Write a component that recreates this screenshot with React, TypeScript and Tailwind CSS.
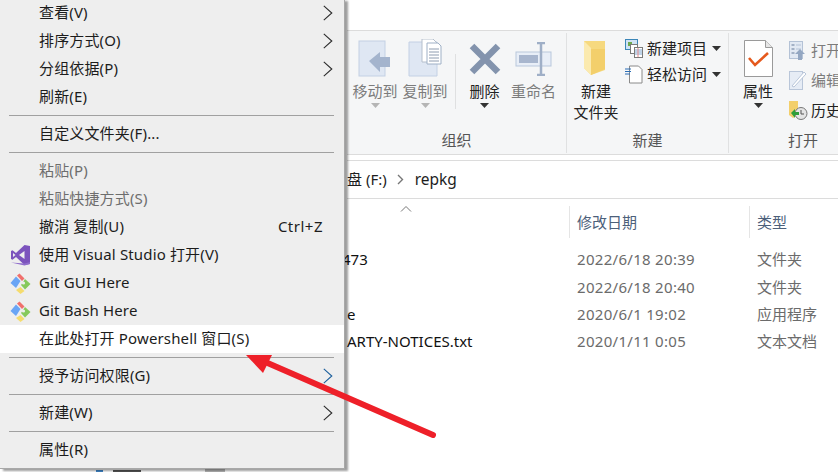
import React from 'react';

const Caret = ({ color = '#333' }: { color?: string }) => (
  <svg width="9" height="5" viewBox="0 0 9 5" className="block"><path d="M0 0h9L4.5 5z" fill={color} /></svg>
);

const Chevron = ({ color = '#2b2b2b' }: { color?: string }) => (
  <svg width="10" height="16" viewBox="0 0 10 16" className="block">
    <path d="M0.8 0.8 L8.8 8 L0.8 15.2" fill="none" stroke={color} strokeWidth="1.1" />
  </svg>
);

const VsIcon = () => (
  <svg width="21" height="21" viewBox="0 0 21 21">
    <path d="M20 1 14.5 0 6 8 2.5 5.2 1 6v8l1.5.8L6 12l8.5 8 5.5-1z" fill="#7c53bd" />
    <path d="M14.5 6v8L9 10zM3 8l2.5 2L3 12z" fill="#eeeeee" />
    <path d="M1 17.5 14.5 20.5 20 19v-2l-5.5 1.5z" fill="#8f6ccb" />
  </svg>
);

const GitIcon = () => (
  <svg width="21" height="21" viewBox="0 0 21 21">
    <path d="M6 3.5 10.5 8 6 15 0.5 10z" fill="#6aa5f5" />
    <path d="M10.5 14 14.5 18 10.5 21 6 17z" fill="#f5dc6e" />
    <path d="M15 6 20.5 11 15 16.5 11 12z" fill="#86c95c" />
    <path d="M7 2.5 9.5 0.5 14.5 5.5 12 8z" fill="#f0706c" />
    <circle cx="13.5" cy="10" r="1.6" fill="#eeeeee" />
  </svg>
);

type MenuItem = {
  label?: string;
  sep?: boolean;
  sub?: boolean;
  dim?: boolean;
  hot?: boolean;
  icon?: React.ReactNode;
  shortcut?: string;
  chevronColor?: string;
};

const menu: MenuItem[] = [
  { label: '查看(V)', sub: true },
  { label: '排序方式(O)', sub: true },
  { label: '分组依据(P)', sub: true },
  { label: '刷新(E)' },
  { sep: true },
  { label: '自定义文件夹(F)...' },
  { sep: true },
  { label: '粘贴(P)', dim: true },
  { label: '粘贴快捷方式(S)', dim: true },
  { label: '撤消 复制(U)', shortcut: 'Ctrl+Z' },
  { label: '使用 Visual Studio 打开(V)', icon: <VsIcon /> },
  { label: 'Git GUI Here', icon: <GitIcon /> },
  { label: 'Git Bash Here', icon: <GitIcon /> },
  { label: '在此处打开 Powershell 窗口(S)', hot: true },
  { sep: true },
  { label: '授予访问权限(G)', sub: true, chevronColor: '#1c5f9c' },
  { sep: true },
  { label: '新建(W)', sub: true },
  { sep: true },
  { label: '属性(R)' },
];

const ContextMenu = () => (
  <div className="absolute left-0 top-[-1px] w-[345px] h-[470px] bg-[#eeeeee] border-r border-b border-[#a8a8a8] shadow-[3px_2px_2px_rgba(0,0,0,0.38)] text-[15px] tracking-[0.15px] text-[#1c1c1c]">
    {menu.map((m, i) =>
      m.sep ? (
        <div key={i} className="h-[9px] flex items-center pl-[9px] pr-[10px]">
          <div className="h-px w-full bg-[#a0a0a0]" />
        </div>
      ) : (
        <div key={i} className={`h-[28px] flex items-center relative ${m.hot ? 'bg-white' : ''}`}>
          <div className="w-[39px] shrink-0 flex justify-center pl-[1px]">{m.icon}</div>
          <span className={`flex-1 -mt-[2px] whitespace-nowrap ${m.dim ? 'text-[#6d6d6d]' : ''}`}>{m.label}</span>
          {m.shortcut && <span className="mr-[21px] -mt-[2px] tracking-[0.5px]">{m.shortcut}</span>}
          {m.sub && <div className="mr-[11px]"><Chevron color={m.chevronColor} /></div>}
        </div>
      )
    )}
  </div>
);

const Arrow = () => (
  <svg width="200" height="95" viewBox="0 0 200 95" className="absolute left-[243px] top-[353px]">
    <path d="M20 8 190 82" stroke="#ee2029" strokeWidth="6" strokeLinecap="round" fill="none" />
    <path d="M3 2H29L20 20z" fill="#ee2029" />
  </svg>
);

const MoveIcon = () => (
  <svg width="34" height="38" viewBox="0 0 34 38">
    <rect x="1" y="1" width="26" height="35" fill="#dfe7f3" stroke="#c3d0e4" />
    <path d="M12 27 23 18v5h10v10H23v5z" transform="translate(-1 -6)" fill="#a4b4cd" />
  </svg>
);

const CopyIcon = () => (
  <svg width="34" height="40" viewBox="0 0 34 40">
    <path d="M1 3h28v34H1z" fill="#dfe7f3" stroke="#c3d0e4" />
    <path d="M14 0h11l5 5v18H14z" fill="#fff" stroke="#b5bfcc" />
    <path d="M19 4h11l3 3v18H19z" fill="#fff" stroke="#9fb0c6" />
    <path d="M21 10h10M21 13h10M21 16h10M21 19h10M21 22h10" stroke="#8e9cb0" />
  </svg>
);

const DeleteIcon = () => (
  <svg width="32" height="32" viewBox="0 0 32 32">
    <path d="M3 3 29 29M29 3 3 29" stroke="#8393ad" strokeWidth="6.5" />
  </svg>
);

const RenameIcon = () => (
  <svg width="38" height="34" viewBox="0 0 38 34">
    <rect x="1" y="10" width="35" height="14" fill="#e8eef7" stroke="#b9c7dc" />
    <rect x="4" y="13" width="19" height="8" fill="#a8b6ce" />
    <path d="M22 1h8M22 33h8M26 1v32" stroke="#9fafc7" strokeWidth="2.5" fill="none" />
  </svg>
);

const FolderIcon = () => (
  <svg width="26" height="36" viewBox="0 0 26 36">
    <path d="M1 0h21v29L8 34 1 27z" fill="#f6d97f" />
    <path d="M1 0 8 7v27L1 27z" fill="#fbeaaf" />
    <path d="M8 8h14v20L8 34z" fill="#f3cf6b" />
  </svg>
);

const NewItemIcon = () => (
  <svg width="18" height="19" viewBox="0 0 18 19">
    <rect x="0.5" y="0.5" width="12" height="10" fill="#cfe3f5" stroke="#3b86b8" />
    <rect x="3" y="3" width="4" height="4" fill="#6ea94e" />
    <rect x="5.5" y="5.5" width="7" height="9" fill="#fff" stroke="#7a7a7a" />
    <rect x="9.5" y="8.5" width="8" height="10" fill="#fff" stroke="#7a7a7a" />
    <path d="M10 11h7M10 13h7M10 15h7" stroke="#7fa6cf" />
    <path d="M13 9v9" stroke="#e58a8a" />
  </svg>
);

const EasyAccessIcon = () => (
  <svg width="18" height="19" viewBox="0 0 18 19">
    <path d="M4.5 1v17h12.5V4.5L13.5 1z" fill="#fff" stroke="#8a8a8a" />
    <path d="M0 4h6M0 6.5h6M0 9h5" stroke="#2a6db5" />
  </svg>
);

const PropertiesIcon = () => (
  <svg width="29" height="37" viewBox="0 0 29 37">
    <path d="M.5.5h21l7 7v29H.5z" fill="#fff" stroke="#9a9a9a" />
    <path d="M21.5.5v7h7" fill="#e6e6e6" stroke="#9a9a9a" />
    <path d="M5 18l6 7L24 13" stroke="#e5591d" strokeWidth="2.6" fill="none" />
  </svg>
);

const OpenIcon = () => (
  <svg width="17" height="19" viewBox="0 0 17 19">
    <rect x="0.5" y="0.5" width="13" height="17" fill="#e2e9f3" stroke="#b4c2d6" />
    <path d="M2.5 3h3v2h-3zM2.5 7h3v2h-3zM2.5 11h3v2h-3z" fill="#a3b1c6" />
    <path d="M7 4h5M7 8h5" stroke="#b4c2d6" />
    <path d="M11 8l5 5h-3v6H9v-6H6z" fill="#94a7c2" />
  </svg>
);

const EditIcon = () => (
  <svg width="18" height="20" viewBox="0 0 18 20">
    <rect x="0.5" y="1.5" width="13" height="18" fill="#e6ecf5" stroke="#b9c6d9" />
    <path d="M3 16 15 2l2 2L5 17z" fill="#fff" stroke="#b9c6d9" />
  </svg>
);

const HistoryIcon = () => (
  <svg width="19" height="19" viewBox="0 0 19 19">
    <path d="M0 0h9v14L4 17l-4-3z" fill="#f3cf6b" />
    <circle cx="12" cy="12.5" r="6" fill="#e4e4e4" stroke="#777" />
    <path d="M12 9v4h3" stroke="#555" fill="none" />
    <path d="M2 12l4-4v3h4v3H6v3z" fill="#2f9e3a" />
  </svg>
);

const BigButton = ({ icon, label, dim, caret, w }: { icon: React.ReactNode; label: string; dim?: boolean; caret?: boolean; w: string }) => (
  <div className={`${w} flex flex-col items-center shrink-0`}>
    <div className="h-[41px] flex items-center justify-center">{icon}</div>
    <span className={`mt-[2px] h-[20px] leading-[20px] whitespace-nowrap ${dim ? 'text-[#7c7c7c]' : ''}`}>{label}</span>
    {caret && <div className="mt-[2px]"><Caret color={dim ? '#b5b5b5' : '#333'} /></div>}
  </div>
);

const SmallRow = ({ icon, label, caret, dim, h }: { icon: React.ReactNode; label: string; caret?: boolean; dim?: boolean; h: string }) => (
  <div className={`flex items-center ${h}`}>
    <div className="w-[22px] shrink-0 flex">{icon}</div>
    <span className={`whitespace-nowrap ${dim ? 'text-[#7c7c7c]' : ''}`}>{label}</span>
    {caret && <div className="ml-[5px]"><Caret /></div>}
  </div>
);

const GroupLabel = ({ text }: { text: string }) => (
  <div className="absolute left-0 right-0 bottom-[2px] text-center text-[#555]">{text}</div>
);

const Ribbon = () => (
  <div className="h-[125px] bg-[#f5f6f7] border-y border-[#dcdcdc] flex text-[15px] text-[#222] overflow-hidden">
    {/* 组织 */}
    <div className="relative w-[220px] shrink-0 h-[120px] mt-[2px] border-r border-[#e0e1e2] pt-[5px] flex pl-[3px]">
      <BigButton w="w-[50px]" icon={<MoveIcon />} label="移动到" dim caret />
      <BigButton w="w-[50px]" icon={<CopyIcon />} label="复制到" dim caret />
      <div className="w-px h-[55px] bg-[#dfe0e1] mt-[16px] ml-[5px]" />
      <BigButton w="w-[57px]" icon={<DeleteIcon />} label="删除" caret />
      <BigButton w="w-[41px]" icon={<RenameIcon />} label="重命名" dim />
      <GroupLabel text="组织" />
    </div>
    {/* 新建 */}
    <div className="relative w-[162px] shrink-0 h-[120px] mt-[2px] border-r border-[#e0e1e2] pt-[5px] flex pl-[4px]">
      <div className="w-[50px] flex flex-col items-center shrink-0">
        <div className="h-[41px] flex items-center justify-center"><FolderIcon /></div>
        <span className="mt-[2px] leading-[21px]">新建</span>
        <span className="leading-[21px] whitespace-nowrap">文件夹</span>
      </div>
      <div className="ml-[4px] -mt-[3px]">
        <SmallRow h="h-[26px]" icon={<NewItemIcon />} label="新建项目" caret />
        <SmallRow h="h-[26px]" icon={<EasyAccessIcon />} label="轻松访问" caret />
      </div>
      <GroupLabel text="新建" />
    </div>
    {/* 打开 */}
    <div className="relative w-[109px] shrink-0 h-[120px] mt-[2px] pt-[5px] flex pl-[5px]">
      <div className="w-[48px] shrink-0">
        <BigButton w="w-[48px]" icon={<PropertiesIcon />} label="属性" caret />
      </div>
      <div className="ml-[7px] -mt-[2px]">
        <SmallRow h="h-[29px]" icon={<OpenIcon />} label="打开" dim />
        <SmallRow h="h-[30px]" icon={<EditIcon />} label="编辑" dim />
        <SmallRow h="h-[30px]" icon={<HistoryIcon />} label="历史" />
      </div>
      <div className="absolute left-[44px] w-[60px] bottom-[2px] text-center text-[#555]">打开</div>
    </div>
  </div>
);

const rows = [
  { name: '473', cls: '-ml-[5px]', date: '2022/6/18 20:39', type: '文件夹' },
  { name: '', cls: '', date: '2022/6/18 20:40', type: '文件夹' },
  { name: 'e', cls: '', date: '2020/6/1 19:02', type: '应用程序' },
  { name: 'ARTY-NOTICES.txt', cls: '', date: '2020/1/11 0:05', type: '文本文档' },
];

const Explorer = () => (
  <div className="pl-[347px] flex flex-col text-[15px]">
    <div className="h-[30px]" />
    <Ribbon />
    <div className="h-[5px]" />
    <div className="h-[39px] border-y border-[#dcdcdc] flex items-center gap-[10px] text-[#1e1e1e]">
      <span>盘 (F:)</span>
      <svg width="7" height="11" viewBox="0 0 7 11" className="mr-[1px]"><path d="M1 1l4.5 4.5L1 10" fill="none" stroke="#777" strokeWidth="1.4" /></svg>
      <span className="text-[15.5px]">repkg</span>
    </div>
    <div className="relative h-[47px] flex text-[#4c607a] pt-[7px]">
      <svg width="12" height="6" viewBox="0 0 12 6" className="absolute left-[53px] top-[7px]"><path d="M1 5.5l5-5 5 5" fill="none" stroke="#777" /></svg>
      <div className="w-[222px] shrink-0" />
      <div className="w-[180px] shrink-0 h-[32px] border-l border-[#e5e5e5] pl-[7px] flex items-center">修改日期</div>
      <div className="flex-1 h-[32px] border-l border-[#e5e5e5] pl-[7px] flex items-center">类型</div>
    </div>
    <div className="flex flex-col">
      {rows.map((r, i) => (
        <div key={i} className="h-[27.2px] flex items-center">
          <div className="w-[230px] shrink-0 text-[#111] whitespace-nowrap"><span className={`block ${r.cls}`}>{r.name}</span></div>
          <div className="w-[180px] shrink-0 text-[#6b6b6b] tracking-[0.3px]">{r.date}</div>
          <div className="flex-1 text-[#6b6b6b] whitespace-nowrap">{r.type}</div>
        </div>
      ))}
    </div>
  </div>
);

export default function App() {
  return (
    <div className="relative w-[838px] h-[472px] overflow-hidden bg-white font-['Noto_Sans','Noto_Sans_CJK_SC',sans-serif]">
      <Explorer />
      {/* bits of the nav pane peeking out under the menu */}
      <div className="absolute left-[96px] top-[470px] w-[7px] h-[2px] bg-[#3f86c9]" />
      <div className="absolute left-[113px] top-[470px] w-[28px] h-[2px] bg-[#555]" />
      <div className="absolute left-[205px] top-[469px] w-[20px] h-[3px] bg-[#b8b8b8]" />
      <ContextMenu />
      <Arrow />
    </div>
  );
}
